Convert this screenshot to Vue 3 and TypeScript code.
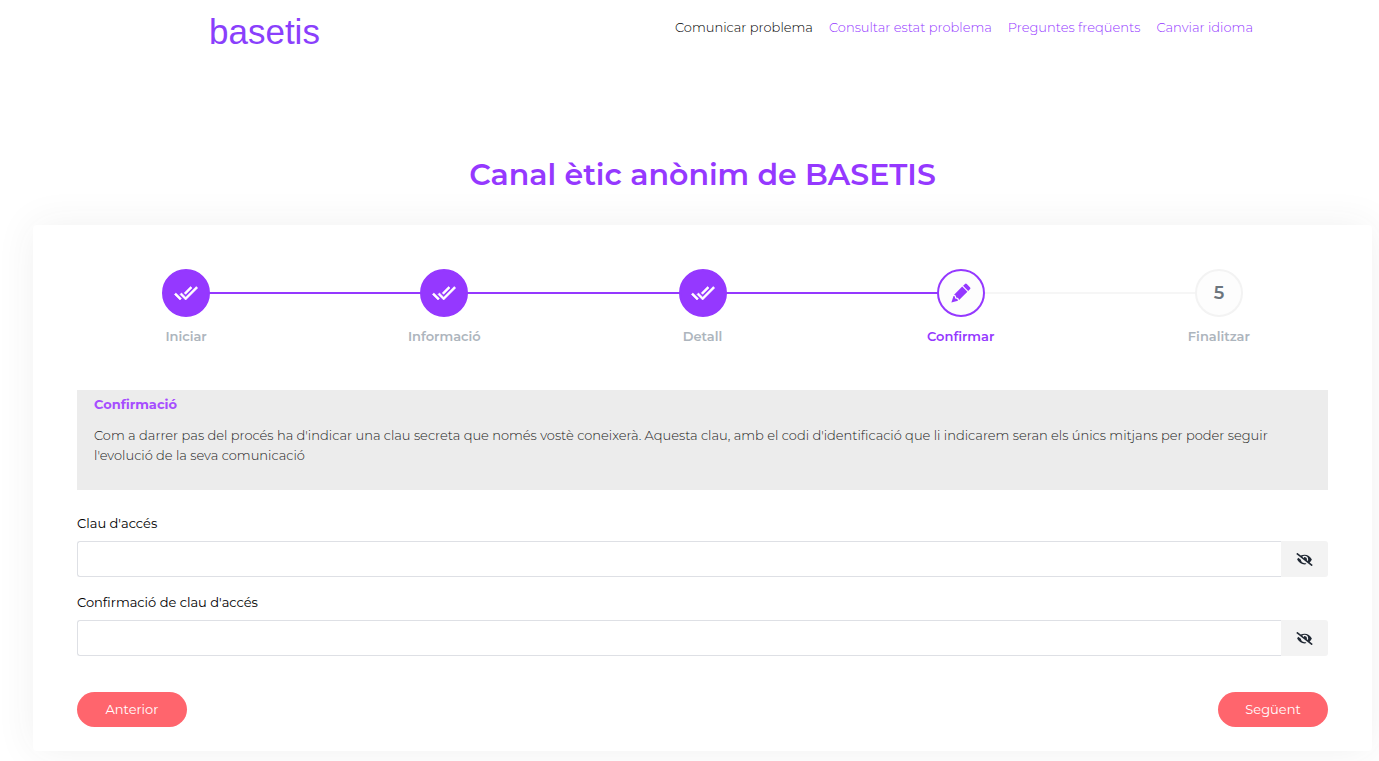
<script setup lang="ts">
import { reactive, ref } from 'vue'

type StepState = 'done' | 'active' | 'pending'
interface Step { label: string; state: StepState }
interface Field { id: string; label: string; value: string; visible: boolean }

const links = ['Comunicar problema', 'Consultar estat problema', 'Preguntes freqüents', 'Canviar idioma']
const current = ref(0)

const steps: Step[] = [
  { label: 'Iniciar', state: 'done' },
  { label: 'Informació', state: 'done' },
  { label: 'Detall', state: 'done' },
  { label: 'Confirmar', state: 'active' },
  { label: 'Finalitzar', state: 'pending' },
]

const fields = reactive<Field[]>([
  { id: 'access-key', label: "Clau d'accés", value: '', visible: false },
  { id: 'access-key-confirm', label: "Confirmació de clau d'accés", value: '', visible: false },
])
</script>

<template>
  <div class="page">
    <header class="top">
      <a class="logo" href="#">basetis</a>
      <nav class="nav">
        <a
          v-for="(link, i) in links"
          :key="link"
          href="#"
          :class="{ current: i === current }"
          @click.prevent="current = i"
        >{{ link }}</a>
      </nav>
    </header>

    <main class="main">
      <h1 class="title">Canal ètic anònim de BASETIS</h1>

      <form class="card" @submit.prevent>
        <ol class="steps">
          <li v-for="(step, i) in steps" :key="step.label" class="step" :class="step.state">
            <span class="dot">
              <svg v-if="step.state === 'done'" width="24" height="24" viewBox="0 0 24 24" aria-hidden="true">
                <path fill="currentColor" stroke="currentColor" stroke-width="0.6" stroke-linejoin="round" d="M18 7l-1.41-1.41-6.34 6.34 1.41 1.41L18 7zm4.24-1.41L11.66 16.17 7.48 12l-1.41 1.41L11.66 19l12-12-1.42-1.41zM.41 13.41L6 19l1.41-1.41L1.83 12 .41 13.41z" />
              </svg>
              <svg v-else-if="step.state === 'active'" width="20" height="20" viewBox="0 0 20 20" aria-hidden="true">
                <path fill="currentColor" d="M14 1q.9-.8 1.8 0l3.3 3.4q.8.9 0 1.7l-1.9 1.8-5.1-5.1zM11.2 3.6l5.2 5.2-8.3 8.1-.9-2-2-.5-.5-2-1.6-.6zM2.5 12.9l1.2.4.5 2.1 2.1.6.7 1.7L.4 19.6z" />
              </svg>
              <template v-else>{{ i + 1 }}</template>
            </span>
            <span class="step-label">{{ step.label }}</span>
          </li>
        </ol>

        <section class="notice">
          <h2>Confirmació</h2>
          <p>Com a darrer pas del procés ha d'indicar una clau secreta que només vostè coneixerà. Aquesta clau, amb el codi d'identificació que li indicarem seran els únics mitjans per poder seguir l'evolució de la seva comunicació</p>
        </section>

        <div v-for="field in fields" :key="field.id" class="field">
          <label :for="field.id">{{ field.label }}</label>
          <div class="group">
            <input :id="field.id" v-model="field.value" :type="field.visible ? 'text' : 'password'">
            <button type="button" class="eye" aria-label="Mostrar clau" @click="field.visible = !field.visible">
              <svg width="17" height="13" viewBox="0 0 640 512" aria-hidden="true">
                <path fill="currentColor" d="M320 400c-75.85 0-137.25-58.71-142.9-133.11L72.2 185.82c-13.79 17.3-26.48 35.59-36.72 55.59a32.35 32.35 0 0 0 0 29.19C89.71 376.41 197.07 448 320 448c26.91 0 52.87-4 77.89-10.46L346 397.39a144.13 144.13 0 0 1-26 2.61zm313.82 58.1l-110.55-85.44a331.25 331.25 0 0 0 81.25-102.07 32.35 32.35 0 0 0 0-29.19C550.29 135.59 442.93 64 320 64a308.15 308.15 0 0 0-147.32 37.7L45.46 3.37A16 16 0 0 0 23 6.18L3.37 31.45A16 16 0 0 0 6.18 53.9l588.36 454.73a16 16 0 0 0 22.46-2.81l19.64-25.27a16 16 0 0 0-2.82-22.45zm-183.72-142l-39.3-30.38A94.75 94.75 0 0 0 416 256a94.76 94.76 0 0 0-121.31-92.21A47.65 47.65 0 0 1 304 192a46.64 46.64 0 0 1-1.54 10l-73.61-56.89A142.31 142.31 0 0 1 320 112a143.92 143.92 0 0 1 144 144c0 21.63-5.29 41.79-13.9 60.11z" />
              </svg>
            </button>
          </div>
        </div>

        <div class="actions">
          <button type="button">Anterior</button>
          <button type="submit">Següent</button>
        </div>
      </form>
    </main>
  </div>
</template>

<style>
body {
  margin: 0;
  background: #fff;
}
</style>

<style scoped>
* {
  box-sizing: border-box;
}

.page {
  padding: 0 7px 10px 33px;
  overflow: hidden;
  font-family: Montserrat, Inter, sans-serif;
  font-size: 13px;
  line-height: 20px;
  color: #000;
}

.top {
  display: flex;
  justify-content: space-between;
  align-items: flex-start;
  padding: 9px 119px 0 176px;
}

.logo {
  font-family: "Liberation Sans", sans-serif;
  font-size: 35px;
  line-height: 46px;
  color: #8a3ffc;
  text-decoration: none;
}

.nav {
  display: flex;
  gap: 16px;
  padding-top: 8px;
}

.nav a {
  color: #9538ff;
  font-weight: 300;
  text-decoration: none;
}

.nav a.current {
  color: #000;
}

.title {
  margin: 99px 0 30px;
  font-size: 30px;
  line-height: 41px;
  font-weight: 600;
  text-align: center;
  color: #9538ff;
}

.card {
  padding: 44px 44px 24px;
  border-radius: 4px;
  background: #fff;
  box-shadow: 0 0 40px rgba(51, 51, 51, 0.07);
}

.steps {
  display: flex;
  margin: 0 -20px 44px;
  padding: 0;
  list-style: none;
}

.step {
  position: relative;
  flex: 1;
  display: flex;
  flex-direction: column;
  align-items: center;
  gap: 9px;
  font-weight: 600;
  color: #adb5bd;
}

.step + .step::before {
  content: "";
  position: absolute;
  top: 23px;
  right: 50%;
  width: 100%;
  height: 2px;
  background: #9538ff;
}

.step.pending::before {
  background: #f6f6f6;
}

.dot {
  position: relative;
  z-index: 1;
  display: flex;
  align-items: center;
  justify-content: center;
  width: 48px;
  height: 48px;
  border: 2px solid #9538ff;
  border-radius: 50%;
  background: #9538ff;
  color: #fff;
  font-size: 18px;
}

.active .dot {
  background: #fdfdfd;
  color: #9538ff;
}

.active .step-label {
  color: #9538ff;
}

.pending .dot {
  border-color: #f3f3f3;
  background: #fdfdfd;
  color: #6c757d;
}

.notice {
  min-height: 100px;
  padding: 4px 17px 24px;
  background: #ececec;
}

.notice h2 {
  margin: 0 0 11px;
  font-size: 13px;
  line-height: 20px;
  font-weight: 700;
  color: #a64dff;
}

.notice p {
  margin: 0;
  font-weight: 300;
  color: #222;
}

.field {
  margin-top: 15px;
}

.notice + .field {
  margin-top: 23px;
}

.field label {
  display: block;
  margin-bottom: 8px;
}

.group {
  display: flex;
  height: 36px;
}

.group input {
  flex: 1;
  min-width: 0;
  padding: 0 12px;
  border: 1px solid #dee0e5;
  border-right: 0;
  border-radius: 3px 0 0 3px;
  background: #fff;
  font: inherit;
}

.eye {
  display: flex;
  align-items: center;
  justify-content: center;
  width: 47px;
  padding: 0;
  border: 0;
  border-radius: 0 3px 3px 0;
  background: #f3f3f3;
  color: #212934;
}

.actions {
  display: flex;
  justify-content: space-between;
  margin-top: 36px;
}

.actions button {
  width: 110px;
  height: 35px;
  padding: 0 0 1px;
  border: 0;
  border-radius: 18px;
  background: #ff656d;
  color: #fff;
  font: inherit;
}
</style>
